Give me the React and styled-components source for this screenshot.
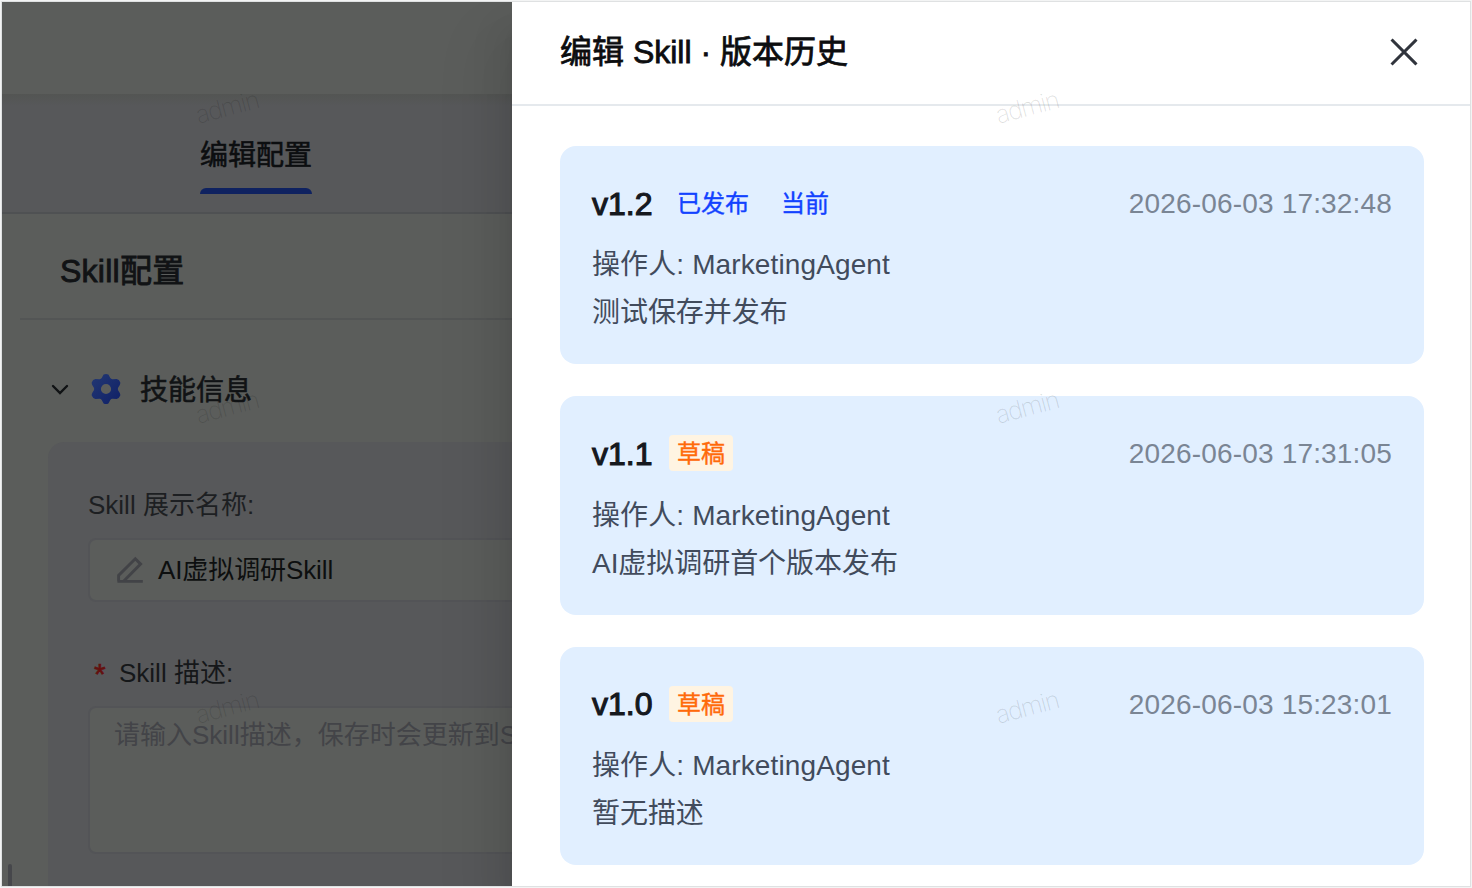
import React from "react";
import styled, { createGlobalStyle } from "styled-components";

const GlobalStyle = createGlobalStyle`
  * {
    box-sizing: border-box;
  }
  body {
    margin: 0;
    background: #f3f4f4;
    font-family: "Liberation Sans", "Noto Sans CJK SC", sans-serif;
  }
`;

const versions = [
  {
    name: "v1.2",
    tags: [
      { text: "已发布", type: "published" },
      { text: "当前", type: "current" },
    ],
    time: "2026-06-03 17:32:48",
    operator: "MarketingAgent",
    description: "测试保存并发布",
  },
  {
    name: "v1.1",
    tags: [{ text: "草稿", type: "draft" }],
    time: "2026-06-03 17:31:05",
    operator: "MarketingAgent",
    description: "AI虚拟调研首个版本发布",
  },
  {
    name: "v1.0",
    tags: [{ text: "草稿", type: "draft" }],
    time: "2026-06-03 15:23:01",
    operator: "MarketingAgent",
    description: "暂无描述",
  },
];

const watermarks = [
  [227, 107],
  [227, 407],
  [227, 707],
  [1027, 107],
  [1027, 407],
  [1027, 707],
];

function ChevronIcon() {
  return (
    <svg width="20" height="20" viewBox="0 0 20 20" fill="none">
      <path
        d="M3 7 10 14 17 7"
        stroke="#101214"
        strokeWidth="2.4"
        strokeLinecap="round"
      />
    </svg>
  );
}

function GearIcon() {
  return (
    <svg width="32" height="32" viewBox="0 0 32 32">
      <defs>
        <linearGradient id="gear" x1="0" y1="0" x2="1" y2="1">
          <stop offset="0" stopColor="#233873" />
          <stop offset="1" stopColor="#0f2067" />
        </linearGradient>
      </defs>
      <path
        fill="url(#gear)"
        fillRule="evenodd"
        d="M13.6 1.6Q16 .2 18.4 1.6L20.3 5.1Q21.1 6.3 22.6 6.2L26.6 6.1Q29.3 6.6 30.3 9.4Q30.4 10.8 29.8 11.9L28.1 14.7Q27.5 16 28.1 17.3L29.8 20.1Q30.4 21.2 30.3 22.6Q29.3 25.4 26.6 25.9L22.6 25.8Q21.1 25.7 20.3 26.9L18.4 30.4Q16 31.8 13.6 30.4L11.7 26.9Q10.9 25.7 9.4 25.8L5.4 25.9Q2.7 25.4 1.7 22.6Q1.6 21.2 2.2 20.1L3.9 17.3Q4.5 16 3.9 14.7L2.2 11.9Q1.6 10.8 1.7 9.4Q2.7 6.6 5.4 6.1L9.4 6.2Q10.9 6.3 11.7 5.1ZM16 10.9A5.1 5.1 0 1 0 16 21.1A5.1 5.1 0 1 0 16 10.9Z"
      />
    </svg>
  );
}

function PencilIcon() {
  return (
    <svg width="28" height="28" viewBox="0 0 28 28" fill="none">
      <path
        d="M1.4 25.4H26.8M2.6 25.3V19.4L19.3 2.8L24.6 8.1L7.6 25.3"
        stroke="#424347"
        strokeWidth="2.9"
      />
    </svg>
  );
}

function CloseIcon() {
  return (
    <svg width="28" height="28" viewBox="0 0 28 28" fill="none">
      <path
        d="M2.6 2.6 25.4 25.4M25.4 2.6 2.6 25.4"
        stroke="#30343c"
        strokeWidth="3"
        strokeLinecap="square"
      />
    </svg>
  );
}

export default function App() {
  return (
    <>
      <GlobalStyle />
      <Window>
        <EditorPane>
          <TopBar />
          <TabBar>
            <Tab>编辑配置</Tab>
          </TabBar>
          <PageTitle>Skill配置</PageTitle>
          <SectionHeader>
            <ChevronIcon />
            <GearIcon />
            <SectionTitle>技能信息</SectionTitle>
          </SectionHeader>
          <FormPanel>
            <Label>Skill 展示名称:</Label>
            <NameField>
              <PencilIcon />
              <NameText>AI虚拟调研Skill</NameText>
            </NameField>
            <Label $required>
              <Asterisk>*</Asterisk>
              Skill 描述:
            </Label>
            <DescriptionField>
              请输入Skill描述，保存时会更新到S
            </DescriptionField>
          </FormPanel>
          <ScrollThumb />
        </EditorPane>

        <Drawer>
          <DrawerHeader>
            <DrawerTitle>编辑 Skill · 版本历史</DrawerTitle>
            <CloseButton aria-label="close">
              <CloseIcon />
            </CloseButton>
          </DrawerHeader>
          <VersionList>
            {versions.map((version) => (
              <VersionCard key={version.name}>
                <VersionRow>
                  <VersionName>{version.name}</VersionName>
                  {version.tags.map((tag) => (
                    <Tag key={tag.text} $type={tag.type}>
                      {tag.text}
                    </Tag>
                  ))}
                  <Time>{version.time}</Time>
                </VersionRow>
                <CardText $spaced>操作人: {version.operator}</CardText>
                <CardText>{version.description}</CardText>
              </VersionCard>
            ))}
          </VersionList>
        </Drawer>
      </Window>
      {watermarks.map(([x, y]) => (
        <Watermark key={`${x}-${y}`} style={{ left: x, top: y }}>
          admin
        </Watermark>
      ))}
    </>
  );
}

const Window = styled.div`
  display: flex;
  width: 1468px;
  height: 884px;
  margin: 2px;
  overflow: hidden;
  background: #fff;
  outline: 1px solid #dfe1e2;
`;

const EditorPane = styled.div`
  position: relative;
  width: 510px;
  height: 884px;
  overflow: hidden;
  background: #5b5d5b;
`;

const TopBar = styled.div`
  height: 92px;
`;

const TabBar = styled.div`
  display: flex;
  height: 120px;
  padding-left: 198px;
  background: linear-gradient(#535553, #57585a 12px);
  border-bottom: 2px solid #4f5153;
`;

const Tab = styled.div`
  position: relative;
  display: flex;
  align-items: center;
  height: 100px;
  padding-top: 18px;
  color: #0c0e10;
  font-size: 28px;
  -webkit-text-stroke: 0.6px;
  &::after {
    content: "";
    position: absolute;
    left: 0;
    right: 0;
    bottom: 0;
    height: 6px;
    border-radius: 6px 6px 0 0;
    background: #0f2260;
  }
`;

const PageTitle = styled.div`
  height: 106px;
  margin-left: 18px;
  padding-left: 40px;
  border-bottom: 2px solid #535555;
  color: #111315;
  font-size: 32px;
  line-height: 114px;
  letter-spacing: 0.25px;
  -webkit-text-stroke: 0.9px;
`;

const SectionHeader = styled.div`
  display: flex;
  align-items: center;
  height: 122px;
  padding: 16px 0 0 48px;
  svg + svg {
    margin-left: 20px;
  }
`;

const SectionTitle = styled.div`
  margin: -2px 0 0 18px;
  color: #111315;
  font-size: 28px;
  -webkit-text-stroke: 0.6px;
`;

const FormPanel = styled.div`
  width: 600px;
  height: 500px;
  margin-left: 46px;
  padding: 38px 40px;
  border-radius: 16px;
  background: #57585a;
`;

const Label = styled.div`
  display: flex;
  align-items: center;
  height: ${({ $required }) => ($required ? "49px" : "44px")};
  margin: ${({ $required }) => ($required ? "44px 0 11px" : "0 0 14px")};
  color: ${({ $required }) => ($required ? "#151719" : "#1d1f22")};
  font-size: 26px;
  white-space: pre;
`;

const Asterisk = styled.span`
  width: 31px;
  padding: 6px 0 0 6px;
  color: #64100f;
  font-size: 30px;
  -webkit-text-stroke: 0.6px;
`;

const NameField = styled.div`
  display: flex;
  align-items: center;
  gap: 14px;
  height: 64px;
  padding-left: 26px;
  border: 2px solid #535457;
  border-radius: 8px;
  background: #5b5d5b;
  color: #0d0f0f;
  font-size: 26px;
`;

const NameText = styled.span`
  padding-bottom: 6px;
  letter-spacing: -0.1px;
`;

const DescriptionField = styled.div`
  height: 148px;
  padding: 5px 0 0 24px;
  border: 2px solid #535457;
  border-radius: 8px;
  background: #5b5d5b;
  color: #434448;
  font-size: 26px;
  line-height: 44px;
  white-space: nowrap;
`;

const ScrollThumb = styled.div`
  position: absolute;
  left: 6px;
  top: 862px;
  width: 4px;
  height: 30px;
  border-radius: 2px;
  background: #46474b;
`;

const Drawer = styled.div`
  position: relative;
  flex: 1;
  background: #fff;
  box-shadow:
    -12px 24px 32px rgba(0, 0, 0, 0.07),
    -6px 24px 12px -8px rgba(0, 0, 0, 0.06),
    -18px 40px 56px 10px rgba(0, 0, 0, 0.05);
`;

const DrawerHeader = styled.div`
  display: flex;
  align-items: center;
  justify-content: space-between;
  height: 104px;
  padding: 0 52px 2px 48px;
  border-bottom: 2px solid #e5e9ed;
`;

const DrawerTitle = styled.div`
  padding-bottom: 7px;
  color: #0c0d0f;
  font-size: 32px;
  -webkit-text-stroke: 0.8px;
`;

const CloseButton = styled.button`
  display: flex;
  padding: 0;
  border: none;
  background: transparent;
  cursor: pointer;
`;

const VersionList = styled.div`
  display: flex;
  flex-direction: column;
  gap: 32px;
  padding: 40px 46px 0 48px;
`;

const VersionCard = styled.div`
  height: 218.4px;
  padding: 34px 32px 0;
  border-radius: 16px;
  background: #e1efff;
`;

const VersionRow = styled.div`
  display: flex;
  align-items: center;
  gap: 16px;
  height: 48px;
  margin-bottom: 13.4px;
`;

const VersionName = styled.div`
  width: 61px;
  color: #15181e;
  font-size: 32px;
  -webkit-text-stroke: 1.1px;
`;

const Tag = styled.div`
  height: 36px;
  margin-top: -2px;
  padding: 0 8px;
  border-radius: 4px;
  background: ${({ $type }) => ($type === "draft" ? "#fff4e2" : "transparent")};
  color: ${({ $type }) => ($type === "draft" ? "#ff6a0a" : "#1242ff")};
  font-size: 24px;
  line-height: 37px;
  -webkit-text-stroke: 0.4px;
`;

const Time = styled.div`
  margin-left: auto;
  color: #7a8594;
  font-size: 28px;
  letter-spacing: 0.17px;
`;

const CardText = styled.div`
  height: 48px;
  color: #414b5c;
  font-size: 28px;
  line-height: 48px;
  letter-spacing: ${({ $spaced }) => ($spaced ? "0.12px" : "-0.05px")};
`;

const Watermark = styled.div`
  position: absolute;
  transform: translate(-50%, -50%) rotate(-15deg);
  color: rgba(0, 0, 0, 0.12);
  font-family: Inter, sans-serif;
  font-size: 25px;
  font-weight: 200;
  letter-spacing: -1.3px;
  pointer-events: none;
`;
